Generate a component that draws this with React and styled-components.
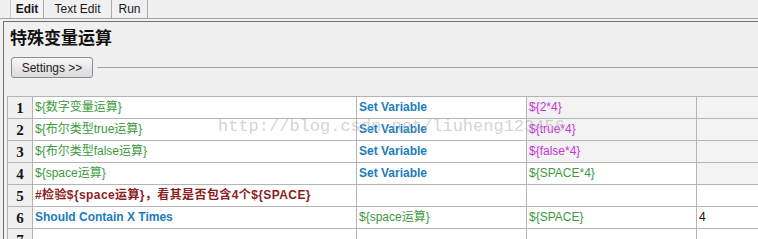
import React from "react";
import styled, { createGlobalStyle } from "styled-components";

const Global = createGlobalStyle`
  html, body { margin: 0; padding: 0; background: #f0f0f0; overflow: hidden; }
  body { font-family: "Liberation Sans", "Noto Sans CJK SC", sans-serif; }
`;

const Page = styled.div`
  width: 758px;
  height: 239px;
  overflow: hidden;
  background: #f0f0f0;
`;

const TabBar = styled.div`
  display: flex;
  height: 18px;
  padding-left: 10px;
  border-bottom: 1px solid #a4a4a4;
`;

const Tab = styled.div`
  display: flex;
  align-items: center;
  justify-content: center;
  width: ${(p) => p.$w}px;
  box-sizing: border-box;
  border-left: ${(p) => (p.$first ? "1px solid #c8c8c8" : "none")};
  border-right: 1px solid #a8a8a8;
  font-size: 12px;
  font-weight: ${(p) => (p.$active ? 700 : 400)};
  color: #1a1a1a;
  background: ${(p) => (p.$active ? "#f4f4f4" : "#f0f0f0")};
`;

const Panel = styled.div`
  margin: 2px 0 0 3px;
  border-left: 1px solid #6e6e6e;
  border-top: 1px solid #6e6e6e;
  height: 240px;
`;

const Title = styled.div`
  margin: 5px 0 0 6px;
  font-family: "Noto Sans CJK SC", sans-serif;
  font-size: 17px;
  font-weight: 700;
  line-height: 20px;
  color: #111;
`;

const SettingsRow = styled.div`
  display: flex;
  align-items: center;
  margin: 10px 0 0 7px;
`;

const Button = styled.button`
  width: 82px;
  height: 21px;
  box-sizing: border-box;
  padding: 0;
  border: 1px solid #8c8c8c;
  border-radius: 3px;
  background: linear-gradient(#f7f7f7, #dadada);
  font-family: "Liberation Sans", sans-serif;
  font-size: 12px;
  color: #1e1e1e;
`;

const Rule = styled.div`
  flex: 1;
  height: 1px;
  margin-left: 4px;
  background: #a0a0a0;
`;

const TableWrap = styled.div`
  position: relative;
  margin: 18px 0 0 3px;
`;

const Grid = styled.div`
  display: grid;
  grid-template-columns: 25px 324px 170px 170px 170px;
  grid-auto-rows: 22px;
  border-left: 1px solid #b4b4b4;
  border-top: 1px solid #b4b4b4;
  width: max-content;
`;

const Cell = styled.div`
  box-sizing: border-box;
  border-right: 1px solid #b4b4b4;
  border-bottom: 1px solid #b4b4b4;
  background: ${(p) => (p.$shade ? "#f3f3f3" : "#ffffff")};
  padding-left: 2px;
  font-family: "Liberation Sans", "Noto Sans CJK SC", sans-serif;
  font-size: 12px;
  line-height: 21px;
  white-space: nowrap;
  overflow: hidden;
  letter-spacing: ${(p) => (p.$kind === "comment" ? "0.4px" : "0")};
  color: ${(p) =>
    p.$kind === "var"
      ? "#3b9a3b"
      : p.$kind === "kw"
      ? "#1b7cbe"
      : p.$kind === "arg"
      ? "#c834d8"
      : p.$kind === "comment"
      ? "#8c1d1d"
      : "#111"};
  font-weight: ${(p) => (p.$kind === "kw" || p.$kind === "comment" ? 700 : 400)};
`;

const NumCell = styled.div`
  box-sizing: border-box;
  border-right: 1px solid #b4b4b4;
  border-bottom: 1px solid #b4b4b4;
  background: #f0f0f0;
  display: flex;
  align-items: center;
  justify-content: center;
  font-family: "Liberation Serif", serif;
  font-weight: 700;
  font-size: 15px;
  color: #141414;
  padding-top: 2px;
`;

const Watermark = styled.div`
  position: absolute;
  left: 211px;
  top: 21px;
  font-family: "Liberation Mono", monospace;
  font-size: 17px;
  line-height: 20px;
  color: rgba(175, 175, 175, 0.55);
  pointer-events: none;
  white-space: nowrap;
`;

const rows = [
  [
    { t: "${数字变量运算}", k: "var" },
    { t: "Set Variable", k: "kw" },
    { t: "${2*4}", k: "arg", s: true },
    { t: "", s: true },
  ],
  [
    { t: "${布尔类型true运算}", k: "var" },
    { t: "Set Variable", k: "kw" },
    { t: "${true*4}", k: "arg", s: true },
    { t: "", s: true },
  ],
  [
    { t: "${布尔类型false运算}", k: "var" },
    { t: "Set Variable", k: "kw" },
    { t: "${false*4}", k: "arg", s: true },
    { t: "", s: true },
  ],
  [
    { t: "${space运算}", k: "var" },
    { t: "Set Variable", k: "kw" },
    { t: "${SPACE*4}", k: "var" },
    { t: "", s: true },
  ],
  [
    { t: "#检验${space运算}，看其是否包含4个${SPACE}", k: "comment" },
    { t: "" },
    { t: "" },
    { t: "" },
  ],
  [
    { t: "Should Contain X Times", k: "kw" },
    { t: "${space运算}", k: "var" },
    { t: "${SPACE}", k: "var" },
    { t: "4" },
  ],
  [{ t: "" }, { t: "" }, { t: "" }, { t: "" }],
];

export default function App() {
  return (
    <Page>
      <Global />
      <TabBar>
        <Tab $w={34} $first $active>Edit</Tab>
        <Tab $w={68}>Text Edit</Tab>
        <Tab $w={36}>Run</Tab>
      </TabBar>
      <Panel>
        <Title>特殊变量运算</Title>
        <SettingsRow>
          <Button>Settings &gt;&gt;</Button>
          <Rule />
        </SettingsRow>
        <TableWrap>
          <Grid>
            {rows.map((r, i) => (
              <React.Fragment key={i}>
                <NumCell>{i + 1}</NumCell>
                {r.map((c, j) => (
                  <Cell key={j} $kind={c.k} $shade={c.s}>
                    {c.t}
                  </Cell>
                ))}
              </React.Fragment>
            ))}
          </Grid>
          <Watermark>http://blog.csdn.net/liuheng123456</Watermark>
        </TableWrap>
      </Panel>
    </Page>
  );
}
